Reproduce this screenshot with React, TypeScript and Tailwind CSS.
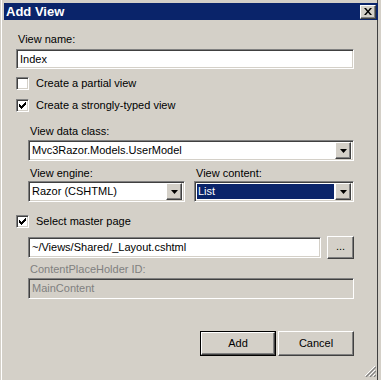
const font = { fontFamily: '"Liberation Sans", Arial, sans-serif' }

const sunken =
  "border border-t-[#808080] border-l-[#808080] border-b-white border-r-white shadow-[inset_1px_1px_0_#404040,inset_-1px_-1px_0_#d4d0c8]"

const raised =
  "border border-t-white border-l-white border-b-[#404040] border-r-[#404040] shadow-[inset_-1px_-1px_0_#808080,inset_1px_1px_0_#d4d0c8]"

function Check({ checked }: { checked?: boolean }) {
  return (
    <div className={`flex h-[13px] w-[13px] shrink-0 items-center justify-center bg-white ${sunken}`}>
      {checked && (
        <svg width="7" height="7" viewBox="0 0 7 7">
          <path d="M0 2h1v1h1v1h1V3h1V2h1V1h1V0h1v3H6v1H5v1H4v1H3v1H2V6H1V5H0z" fill="#000" />
        </svg>
      )}
    </div>
  )
}

function CheckRow({ label, checked }: { label: string; checked?: boolean }) {
  return (
    <div className="flex h-[13px] items-center gap-[7px]">
      <Check checked={checked} />
      <span className="leading-[13px] text-black">{label}</span>
    </div>
  )
}

function Arrow() {
  return (
    <div className={`flex h-[17px] w-[16px] shrink-0 items-center justify-center bg-[#d4d0c8] ${raised}`}>
      <svg width="7" height="4" viewBox="0 0 7 4">
        <path d="M0 0h7L3.5 4z" fill="#000" />
      </svg>
    </div>
  )
}

function Select({ value, selected, className }: { value: string; selected?: boolean; className?: string }) {
  return (
    <div className={`flex h-[21px] items-center bg-white p-[2px] ${sunken} ${className ?? ""}`}>
      <div className="flex h-full flex-1 items-center pr-[1px]">
        <span
          className={`flex h-[15px] flex-1 items-center px-[1px] ${
            selected ? "bg-[#0a246a] text-white" : "text-black"
          }`}
        >
          {value}
        </span>
      </div>
      <Arrow />
    </div>
  )
}

function Label({ children, muted }: { children: string; muted?: boolean }) {
  return <div className={`h-[13px] pl-[2px] leading-[13px] ${muted ? "text-[#808080]" : "text-black"}`}>{children}</div>
}

function Button({ label, isDefault }: { label: string; isDefault?: boolean }) {
  return (
    <div className={`h-[25px] ${isDefault ? "w-[76px] border border-black" : "w-[76px]"}`}>
      <div className={`flex h-full w-full items-center justify-center bg-[#d4d0c8] text-black ${raised}`}>{label}</div>
    </div>
  )
}

export default function App() {
  return (
    <div
      className="relative h-[380px] w-[381px] overflow-hidden bg-[#d4d0c8] text-[11px] shadow-[inset_1px_0_0_#d4d0c8,inset_2px_0_0_#fff,inset_-3px_0_0_#d4d0c8,inset_-4px_0_0_#404040]"
      style={font}
    >
      <div className="pl-[4px] pr-[3px] pt-[3px]">
        <div className="flex h-[17px] items-center justify-between bg-[#0a246a] pl-[2px] pr-[2px]">
          <span className="text-[13px] font-bold leading-none text-white">Add View</span>
          <div className={`flex h-[14px] w-[16px] items-center justify-center bg-[#d4d0c8] ${raised}`}>
            <svg width="8" height="7" viewBox="0 0 8 7">
              <path d="M0 0h2l2 2.5L6 0h2L5 3.5 8 7H6L4 4.5 2 7H0l3-3.5z" fill="#000" />
            </svg>
          </div>
        </div>
      </div>

      <div className="flex flex-col pl-[16px] pr-[27px] pt-[13px]">
        <Label>View name:</Label>
        <div className={`mt-[3px] flex h-[20px] items-center bg-white px-[3px] text-black ${sunken}`}>Index</div>

        <div className="mt-[8px]">
          <CheckRow label="Create a partial view" />
        </div>
        <div className="mt-[9px]">
          <CheckRow label="Create a strongly-typed view" checked />
        </div>

        <div className="flex flex-col pl-[12px]">
          <div className="mt-[13px]">
            <Label>View data class:</Label>
          </div>
          <Select className="mt-[2px]" value="Mvc3Razor.Models.UserModel" />

          <div className="mt-[6px] flex gap-[9px]">
            <div className="flex w-[157px] flex-col">
              <Label>View engine:</Label>
              <Select className="mt-[1px]" value="Razor (CSHTML)" />
            </div>
            <div className="flex flex-1 flex-col">
              <Label>View content:</Label>
              <Select className="mt-[1px]" value="List" selected />
            </div>
          </div>
        </div>

        <div className="mt-[13px]">
          <CheckRow label="Select master page" checked />
        </div>

        <div className="flex flex-col pl-[12px]">
          <div className="mt-[8px] flex items-center gap-[6px]">
            <div className={`flex h-[21px] flex-1 items-center bg-white px-[3px] text-black ${sunken}`}>
              ~/Views/Shared/_Layout.cshtml
            </div>
            <div className={`flex h-[23px] w-[27px] items-center justify-center bg-[#d4d0c8] pb-[3px] text-black ${raised}`}>
              ...
            </div>
          </div>
          <div className="mt-[4px]">
            <Label muted>ContentPlaceHolder ID:</Label>
          </div>
          <div
            className={`mt-[2px] flex h-[21px] items-center bg-[#d4d0c8] px-[3px] text-[#808080] ${sunken}`}
          >
            MainContent
          </div>
        </div>

        <div className="mt-[32px] flex justify-end gap-[2px]">
          <Button label="Add" isDefault />
          <Button label="Cancel" />
        </div>
      </div>

      <svg className="absolute bottom-[3px] right-[5px]" width="12" height="12" viewBox="0 0 12 12">
        <path d="M11 1L1 11M11 5L5 11M11 9L9 11" stroke="#fff" strokeWidth="1" />
        <path d="M12 2L2 12M12 6L6 12M12 10L10 12" stroke="#808080" strokeWidth="1.2" />
      </svg>
    </div>
  )
}
